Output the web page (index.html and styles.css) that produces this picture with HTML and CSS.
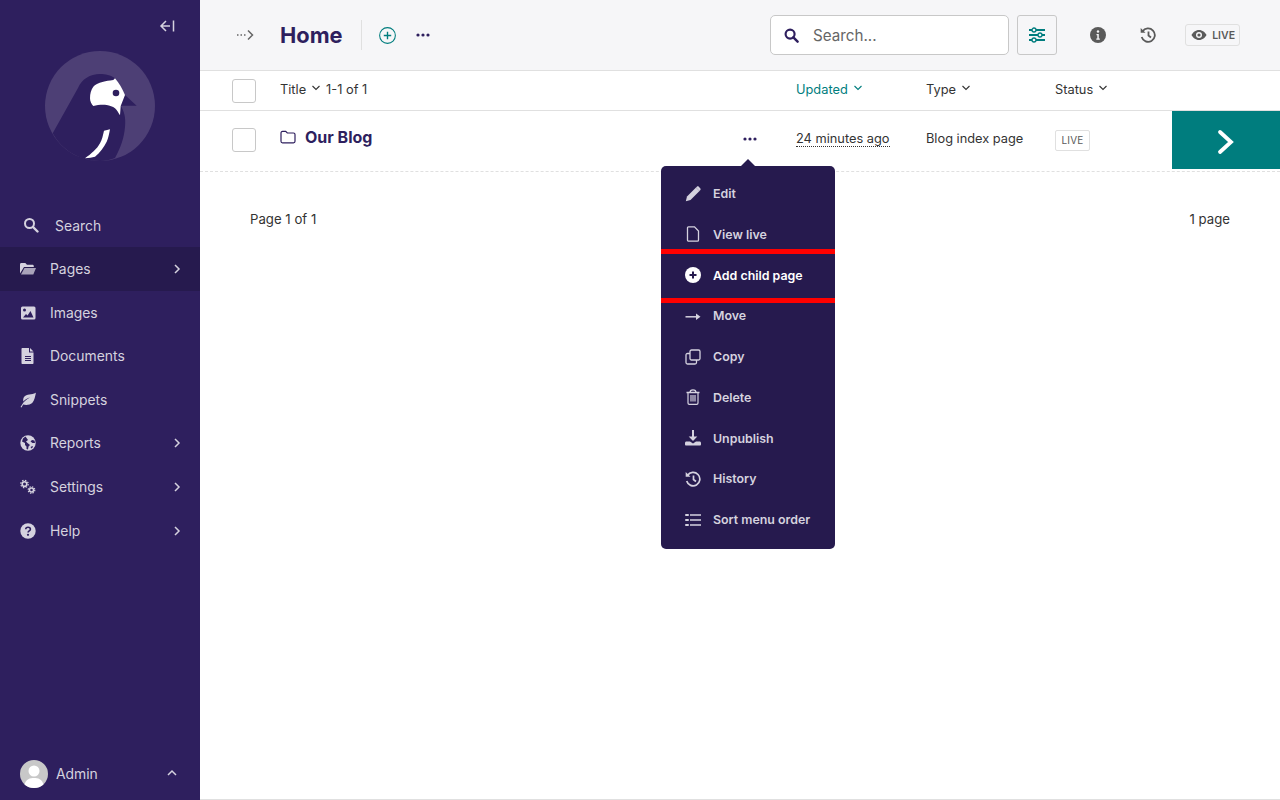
FILE: index.html
```html
<!DOCTYPE html>
<html lang="en">
<head>
    <meta charset="UTF-8">
    <meta name="viewport" content="width=device-width, initial-scale=1.0">
    <title>Home - Pages</title>
    <link rel="stylesheet" href="styles.css">
</head>
<body>

<!-- sidebar -->
<aside class="sidebar">
    <div class="collapse-row">
        <svg class="collapse-icon" viewBox="0 0 16 14"><path d="M7 2 2 7l5 5M2 7h9M14.5 1.500v11" fill="none" stroke="currentColor" stroke-width="1.500"/></svg>
    </div>
    <div class="logo-row">
        <svg class="logo" viewBox="0 0 110 110">
            <circle cx="55" cy="55" r="55" fill="#4d3f75"/>
            <path d="M7.700 82.300 33 37C37 28 45 23 55 23c5 0 11 1 15 4.300L80 44l11.700 10.700H75.700C79 60 81 66 80 76c-1 11-4 20-10 31-5 2-10 3-15 3-21 0-38-11-47.300-27.700z" fill="#2e1f5e"/>
            <path d="M70 27.300 68.300 29C64 29.500 61 30 58.300 30.700 53 32 50 33.500 48.300 35.700 46 38.500 45 43 45 47.300c0 3 1.500 6 3.300 7.700 4-1 9-1.500 13.400-1 3 .5 6 1.500 8.300 3.300 2 2 3.500 4.500 5 7l.7-9.300L80 44c-2.500-6-6-12-10-16.700z" fill="#fff"/>
            <circle cx="71" cy="42" r="3.300" fill="#2e1f5e"/>
            <path d="M65 78.300 59 79.700C58 84 57 89 55 92.300 52 98 46 103 40 107.300c4-.3 7-.8 10-1.600C55 102 59 96 61.700 90.700 63.500 87 64 83 65 78.300z" fill="#fff"/>
        </svg>
    </div>

    <div class="side-search">
        <svg class="nav-icon" viewBox="0 0 16 16"><circle cx="6.500" cy="6.500" r="4.500" fill="none" stroke="currentColor" stroke-width="2"/><path d="m10 10 4.500 4.500" stroke="currentColor" stroke-width="2.400" stroke-linecap="round"/></svg>
        <span>Search</span>
    </div>

    <nav class="side-nav">
        <a class="nav-item active">
            <svg class="nav-icon" viewBox="0 0 16 16"><path d="M0 3.500C0 2.700.5 2 1.300 2h4l1.700 1.700h5.500c.7 0 1.300.6 1.300 1.300v1H4L0 12.500z" fill="currentColor"/><path d="M4.500 7H16l-2.700 6.500H1z" fill="currentColor" opacity=".75"/></svg>
            <span>Pages</span>
            <svg class="nav-arrow" viewBox="0 0 8 12"><path d="m2 2 4 4-4 4" fill="none" stroke="currentColor" stroke-width="1.500"/></svg>
        </a>
        <a class="nav-item">
            <svg class="nav-icon" viewBox="0 0 16 16"><rect x="1" y="1.500" width="14.500" height="13" rx="1.500" fill="currentColor"/><circle cx="4.500" cy="5" r="1.500" fill="#2e1f5e"/><path d="M3 12.500 6 9l1.500 1.500L10.500 6l3 6.500z" fill="#2e1f5e"/></svg>
            <span>Images</span>
        </a>
        <a class="nav-item">
            <svg class="nav-icon" viewBox="0 0 16 16"><path d="M2.500 0H9v4.500h4.500V15c0 .6-.4 1-1 1h-10c-.6 0-1-.4-1-1V1c0-.6.4-1 1-1z" fill="currentColor"/><path d="M10 0l3.500 3.500H10z" fill="currentColor"/><path d="M5 8.500h6M5 10.500h6M5 12.500h6" stroke="#2e1f5e" stroke-width="1"/></svg>
            <span>Documents</span>
        </a>
        <a class="nav-item">
            <svg class="nav-icon" viewBox="0 0 16 16"><path d="M15.500 1C12 3 6.500 1.500 4 5c-1 1.500-1 3.500-.5 4.500C5 7.500 7.500 6 10 5.500 7 7 4 9 1.500 13.500l-1 1.500 1 .5 1.700-3c2.800 1 6.800.5 9-1.500 2.500-2.500 2.800-6.500 3.800-10.500z" fill="currentColor"/></svg>
            <span>Snippets</span>
        </a>
        <a class="nav-item">
            <svg class="nav-icon" viewBox="0 0 16 16"><circle cx="8" cy="8" r="7.700" fill="currentColor"/><path d="M5.500 1.500 3 3.500 2 6.500l3 1.500L5 10l1.500 1.500V14l1.500.5.500-3L10 10 7.500 8 6 6.500l2-1.500zM12 5l-1.500 1.500 2 1.500H15l-.5-2.500zM10.500 12l2-1 .5 1-1.500 1.500z" fill="#2e1f5e"/></svg>
            <span>Reports</span>
            <svg class="nav-arrow" viewBox="0 0 8 12"><path d="m2 2 4 4-4 4" fill="none" stroke="currentColor" stroke-width="1.500"/></svg>
        </a>
        <a class="nav-item">
            <svg class="nav-icon" viewBox="0 0 16 16"><circle cx="4.500" cy="5" r="2.300" fill="none" stroke="currentColor" stroke-width="1.600"/><circle cx="4.500" cy="5" r="3.700" fill="none" stroke="currentColor" stroke-width="1.200" stroke-dasharray="1.500 1.400"/><circle cx="11.500" cy="11" r="2" fill="none" stroke="currentColor" stroke-width="1.500"/><circle cx="11.500" cy="11" r="3.300" fill="none" stroke="currentColor" stroke-width="1.200" stroke-dasharray="1.400 1.200"/></svg>
            <span>Settings</span>
            <svg class="nav-arrow" viewBox="0 0 8 12"><path d="m2 2 4 4-4 4" fill="none" stroke="currentColor" stroke-width="1.500"/></svg>
        </a>
        <a class="nav-item">
            <svg class="nav-icon" viewBox="0 0 16 16"><circle cx="8" cy="8" r="7.700" fill="currentColor"/><path d="M5.700 6.200C5.800 5 6.800 4.200 8 4.200c1.400 0 2.400.8 2.400 2 0 1.700-2.300 1.600-2.300 3.300" fill="none" stroke="#2e1f5e" stroke-width="1.600"/><circle cx="8" cy="11.800" r="1.100" fill="#2e1f5e"/></svg>
            <span>Help</span>
            <svg class="nav-arrow" viewBox="0 0 8 12"><path d="m2 2 4 4-4 4" fill="none" stroke="currentColor" stroke-width="1.500"/></svg>
        </a>
    </nav>

    <div class="side-footer">
        <svg class="avatar" viewBox="0 0 28 28"><circle cx="14" cy="14" r="14" fill="#c8c8c8"/><circle cx="14" cy="11" r="5.500" fill="#fff"/><path d="M4.500 24.500C6 19 10 18 14 18s8 1 9.500 6.500C21 27 17.500 28 14 28s-7-1-9.500-3.500z" fill="#fff"/></svg>
        <span>Admin</span>
        <svg class="footer-arrow" viewBox="0 0 12 8"><path d="m2 6 4-4 4 4" fill="none" stroke="currentColor" stroke-width="1.500"/></svg>
    </div>
</aside>

<main class="main">
    <!-- top bar -->
    <header class="topbar">
        <svg class="crumb-icon" viewBox="0 0 18 12"><path d="M1 6h1.500M4.500 6H6M8 6h1.500" stroke="currentColor" stroke-width="1.400"/><path d="m12 1.500 4.500 4.500-4.500 4.500" fill="none" stroke="currentColor" stroke-width="1.500"/></svg>
        <h1>Home</h1>
        <div class="divider"></div>
        <svg class="add-icon" viewBox="0 0 16 16"><circle cx="8" cy="8" r="7.400" fill="none" stroke="currentColor" stroke-width="1"/><path d="M4.500 8h7M8 4.500v7" stroke="currentColor" stroke-width="1.300"/></svg>
        <svg class="dots" viewBox="0 0 14 4"><circle cx="2" cy="2" r="1.600"/><circle cx="7" cy="2" r="1.600"/><circle cx="12" cy="2" r="1.600"/></svg>

        <div class="top-right">
            <div class="search-box">
                <svg class="search-icon" viewBox="0 0 16 16"><circle cx="6.500" cy="6.500" r="4.800" fill="none" stroke="currentColor" stroke-width="2.300"/><path d="m10 10 4.500 4.500" stroke="currentColor" stroke-width="2.600" stroke-linecap="round"/></svg>
                <span>Search...</span>
            </div>
            <div class="filter-btn">
                <svg viewBox="0 0 16 16"><path d="M0 3h16M0 8h16M0 13h16" stroke="#007d7e" stroke-width="1.800"/><circle cx="5" cy="3" r="2" fill="#f6f6f8" stroke="#007d7e" stroke-width="1.300"/><circle cx="11" cy="8" r="2" fill="#f6f6f8" stroke="#007d7e" stroke-width="1.300"/><circle cx="5" cy="13" r="2" fill="#f6f6f8" stroke="#007d7e" stroke-width="1.300"/></svg>
            </div>
            <svg class="info-icon" viewBox="0 0 16 16"><circle cx="8" cy="8" r="8" fill="#5a5a5a"/><circle cx="8" cy="4.500" r="1.200" fill="#f6f6f8"/><path d="M6.500 7h2.300v4.500h1v1.200h-3.500v-1.200h1V8.200h-.8z" fill="#f6f6f8"/></svg>
            <svg class="history-icon" viewBox="0 0 16 16"><path d="M2.500 4.500A6.700 6.700 0 1 1 1.700 10" fill="none" stroke="currentColor" stroke-width="1.800"/><path d="M.7 1v4.800h4.800z" fill="currentColor"/><path d="M8.500 4.500V8.500l2.500 2" fill="none" stroke="currentColor" stroke-width="1.800"/></svg>
            <div class="live-badge">
                <svg viewBox="0 0 16 12"><path d="M8 1C4.500 1 1.800 3.500.5 6c1.300 2.500 4 5 7.500 5s6.200-2.500 7.500-5C14.200 3.500 11.500 1 8 1z" fill="#5a5a5a"/><circle cx="8" cy="6" r="3" fill="#f6f6f8"/><circle cx="8" cy="6" r="1.600" fill="#5a5a5a"/></svg>
                <span>LIVE</span>
            </div>
        </div>
    </header>

    <!-- table -->
    <div class="list-head list-grid">
        <div class="check-cell"><div class="checkbox"></div></div>
        <div class="head-cell">
            <span>Title</span>
            <svg class="sort" viewBox="0 0 10 6"><path d="m1.500 1 3.500 3.500L8.500 1" fill="none" stroke="currentColor" stroke-width="1.100"/></svg>
            <span class="count">1-1 of 1</span>
        </div>
        <div class="head-cell updated">
            <span>Updated</span>
            <svg class="sort" viewBox="0 0 10 6"><path d="m1.500 1 3.500 3.500L8.500 1" fill="none" stroke="currentColor" stroke-width="1.100"/></svg>
        </div>
        <div class="head-cell">
            <span>Type</span>
            <svg class="sort" viewBox="0 0 10 6"><path d="m1.500 1 3.500 3.500L8.500 1" fill="none" stroke="currentColor" stroke-width="1.100"/></svg>
        </div>
        <div class="head-cell">
            <span>Status</span>
            <svg class="sort" viewBox="0 0 10 6"><path d="m1.500 1 3.500 3.500L8.500 1" fill="none" stroke="currentColor" stroke-width="1.100"/></svg>
        </div>
        <div></div>
    </div>

    <div class="list-row list-grid">
        <div class="check-cell"><div class="checkbox"></div></div>
        <div class="title-cell">
            <svg class="folder" viewBox="0 0 16 14"><path d="M1 3c0-1 .6-1.700 1.500-1.700h3.200L7.300 3h6.200c.9 0 1.500.7 1.500 1.500v6.800c0 .9-.6 1.500-1.500 1.500h-11c-.9 0-1.500-.6-1.500-1.500z" fill="none" stroke="currentColor" stroke-width="1.200"/></svg>
            <a class="page-title">Our Blog</a>
            <div class="row-more">
                <svg class="dots" viewBox="0 0 14 4"><circle cx="2" cy="2" r="1.600"/><circle cx="7" cy="2" r="1.600"/><circle cx="12" cy="2" r="1.600"/></svg>
                <div class="dropdown">
                    <a class="drop-item">
                        <svg viewBox="0 0 16 16"><path d="M11 1.500 14.500 5 5.500 14 .8 15.200 2 10.500z" fill="currentColor"/><path d="M11.800.8c.6-.6 1.400-.6 2 0l1.400 1.400c.6.600.6 1.400 0 2l-.8.800-3.400-3.400z" fill="currentColor"/></svg>
                        <span>Edit</span>
                    </a>
                    <a class="drop-item">
                        <svg viewBox="0 0 16 16"><path d="M3.500.8h6L13.500 5v9c0 .7-.5 1.200-1.200 1.200H3.700c-.7 0-1.200-.5-1.200-1.200V2c0-.7.4-1.200 1-1.200z" fill="none" stroke="currentColor" stroke-width="1.300"/></svg>
                        <span>View live</span>
                    </a>
                    <a class="drop-item marked">
                        <svg viewBox="0 0 16 16"><circle cx="8" cy="8" r="8" fill="#fff"/><path d="M4.500 8h7M8 4.500v7" stroke="#261a4e" stroke-width="2"/></svg>
                        <span>Add child page</span>
                    </a>
                    <a class="drop-item">
                        <svg viewBox="0 0 16 16"><path d="M.5 8.800h11" stroke="currentColor" stroke-width="1.500"/><path d="m11 5.500 4.500 3.300-4.500 3.200z" fill="currentColor"/></svg>
                        <span>Move</span>
                    </a>
                    <a class="drop-item">
                        <svg viewBox="0 0 16 16"><rect x="5" y="1" width="10" height="10" rx="1.500" fill="none" stroke="currentColor" stroke-width="1.300"/><path d="M5 4.500H2.500C1.600 4.500 1 5.100 1 6v7.500c0 .9.600 1.500 1.500 1.500H10c.9 0 1.500-.6 1.500-1.500V11" fill="none" stroke="currentColor" stroke-width="1.300"/></svg>
                        <span>Copy</span>
                    </a>
                    <a class="drop-item">
                        <svg viewBox="0 0 16 16"><path d="M1.500 3.500h13M5 3.500C5 1.500 6.500.8 8 .8s3 .7 3 2.700" fill="none" stroke="currentColor" stroke-width="1.300"/><path d="M3 3.500V14c0 .7.600 1.300 1.300 1.300h7.400c.7 0 1.300-.6 1.300-1.300V3.500M6 6v6.500M8 6v6.500M10 6v6.500" fill="none" stroke="currentColor" stroke-width="1.200"/></svg>
                        <span>Delete</span>
                    </a>
                    <a class="drop-item">
                        <svg viewBox="0 0 16 16"><path d="M8 0v8.500" stroke="currentColor" stroke-width="2"/><path d="m3.700 6.500 4.300 4.500 4.300-4.500z" fill="currentColor"/><path d="M0 13c0-.9.600-1.500 1.500-1.500H5l3 2 3-2h3.500c.9 0 1.500.6 1.500 1.500v1.500c0 .5-.5 1-1 1H1c-.5 0-1-.5-1-1z" fill="currentColor"/></svg>
                        <span>Unpublish</span>
                    </a>
                    <a class="drop-item">
                        <svg viewBox="0 0 16 16"><path d="M2.500 4.500A6.700 6.700 0 1 1 1.700 10" fill="none" stroke="currentColor" stroke-width="1.700"/><path d="M.7 1v4.800h4.800z" fill="currentColor"/><path d="M8.500 4.500V8.500l2.500 2" fill="none" stroke="currentColor" stroke-width="1.700"/></svg>
                        <span>History</span>
                    </a>
                    <a class="drop-item">
                        <svg viewBox="0 0 16 16"><path d="M5 3h11M5 8h11M5 13h11" stroke="currentColor" stroke-width="1.400"/><path d="M1 3h2M1 8h2M1 13h2" stroke="currentColor" stroke-width="2" stroke-linecap="round"/></svg>
                        <span>Sort menu order</span>
                    </a>
                </div>
            </div>
        </div>
        <div class="updated-cell"><span class="timeago">24 minutes ago</span></div>
        <div class="type-cell">Blog index page</div>
        <div class="status-cell"><span class="status-tag">LIVE</span></div>
        <a class="open-btn">
            <svg viewBox="0 0 18 26"><path d="m3 3 11 10L3 23" fill="none" stroke="#fff" stroke-width="3.800" stroke-linecap="round"/></svg>
        </a>
    </div>

    <div class="pagination">
        <span>Page 1 of 1</span>
        <span>1 page</span>
    </div>
</main>

</body>
</html>
```

FILE: styles.css
```css
* {
    box-sizing: border-box;
}

body {
    margin: 0;
    height: 800px;
    display: flex;
    overflow: hidden;
    font-family: Inter, "Noto Sans", sans-serif;
    color: #333;
    background: #fff;
}

/* sidebar */
.sidebar {
    width: 200px;
    height: 800px;
    flex-shrink: 0;
    display: flex;
    flex-direction: column;
    background: #2e1f5e;
    color: #d5d2df;
    font-size: 13.9px;
}

.collapse-row {
    display: flex;
    justify-content: flex-end;
    padding: 19px 25px 0 0;
    height: 51px;
}

.collapse-icon {
    width: 16px;
    height: 14px;
}

.logo-row {
    display: flex;
    justify-content: center;
    height: 110px;
}

.logo {
    width: 110px;
    height: 110px;
}

.side-search {
    display: flex;
    align-items: center;
    gap: 16px;
    height: 43.2px;
    margin-top: 43px;
    padding-left: 23px;
}

.side-search span {
    margin-top: 1px;
}

.side-search .nav-icon {
    margin-top: -1px;
}

.nav-icon {
    width: 16px;
    height: 16px;
    flex-shrink: 0;
}

.side-nav {
    display: flex;
    flex-direction: column;
}

.nav-item {
    display: flex;
    align-items: center;
    gap: 14px;
    height: 43.6px;
    padding: 0 20px;
}

.nav-item.active {
    background: #261a4e;
}

.nav-arrow {
    width: 8px;
    height: 12px;
    margin-left: auto;
    margin-right: -1px;
}

.side-footer {
    display: flex;
    align-items: center;
    gap: 8px;
    margin-top: auto;
    height: 28px;
    margin-bottom: 12px;
    padding: 0 22px 0 20px;
}

.side-footer span {
    margin-top: -1px;
}

.avatar {
    width: 28px;
    height: 28px;
}

.footer-arrow {
    width: 12px;
    height: 8px;
    margin-left: auto;
    margin-top: -2px;
}

/* top bar */
.main {
    flex: 1;
    min-width: 0;
    height: 800px;
    border-bottom: 1px solid #e0e0e0;
}

.topbar {
    display: flex;
    align-items: center;
    height: 71px;
    padding: 0 40px 0 36px;
    background: #f6f6f8;
    border-bottom: 1px solid #e0e0e0;
}

.crumb-icon {
    width: 18px;
    height: 12px;
    color: #666;
}

h1 {
    margin: 0 0 0 26px;
    font-size: 21.8px;
    font-weight: 700;
    color: #2e1f5e;
}

.divider {
    width: 1px;
    height: 30px;
    margin-left: 18px;
    background: #e0e0e0;
}

.add-icon {
    width: 17px;
    height: 17px;
    margin-left: 17px;
    color: #007d7e;
}

.dots {
    width: 14px;
    height: 4px;
    fill: #2e1f5e;
}

.topbar .dots {
    margin-left: 20px;
}

.top-right {
    display: flex;
    align-items: center;
    margin-left: auto;
}

.search-box {
    display: flex;
    align-items: center;
    gap: 14px;
    width: 239px;
    height: 40px;
    padding-left: 13px;
    background: #fff;
    border: 1px solid #c8c8c8;
    border-radius: 5px;
    font-size: 15.2px;
    color: #666;
}

.search-icon {
    width: 15px;
    height: 15px;
    color: #2e1f5e;
}

.filter-btn {
    display: flex;
    align-items: center;
    justify-content: center;
    width: 40px;
    height: 40px;
    margin-left: 8px;
    border: 1px solid #c8c8c8;
    border-radius: 3px;
}

.filter-btn svg {
    width: 16px;
    height: 16px;
}

.info-icon {
    width: 16px;
    height: 16px;
    margin-left: 33px;
}

.history-icon {
    width: 16px;
    height: 16px;
    margin-left: 34px;
    color: #5a5a5a;
}

.live-badge {
    display: flex;
    align-items: center;
    justify-content: space-between;
    width: 55px;
    height: 22px;
    margin-left: 29px;
    padding: 0 4px 0 5px;
    border: 1px solid #e0e0e0;
    border-radius: 3px;
    font-size: 10.5px;
    font-weight: 600;
    color: #5a5a5a;
}

.live-badge svg {
    width: 16px;
    height: 12px;
}

/* listing */
.list-grid {
    display: grid;
    grid-template-columns: 80px 516px 130px 129px 117px 108px;
    align-items: center;
}

.list-head {
    height: 40px;
    border-bottom: 1px solid #e0e0e0;
    font-size: 12.8px;
}

.check-cell {
    padding-left: 32px;
}

.checkbox {
    width: 24px;
    height: 24px;
    background: #fff;
    border: 1px solid #c8c8c8;
    border-radius: 3px;
}

.head-cell {
    display: flex;
    align-items: center;
    gap: 5px;
    padding-bottom: 3px;
}

.head-cell.updated {
    color: #007d7e;
}

.sort {
    width: 10px;
    height: 6px;
    margin-top: -2px;
}

.list-row {
    height: 61px;
    border-bottom: 1px dashed #e0e0e0;
    font-size: 12.8px;
    align-items: start;
}

.list-row .check-cell {
    padding-top: 17px;
}

.title-cell {
    display: flex;
    align-items: center;
    padding: 16px 39px 0 0;
}

.folder {
    width: 16px;
    height: 14px;
    color: #2e1f5e;
}

.page-title {
    margin-left: 9px;
    font-size: 16px;
    font-weight: 700;
    color: #2e1f5e;
}

.row-more {
    position: relative;
    display: flex;
    margin-left: auto;
    margin-top: 4px;
}

.updated-cell,
.type-cell {
    padding-top: 20px;
}

.status-cell {
    padding-top: 19px;
}

.timeago {
    display: inline-block;
    line-height: 15px;
    border-bottom: 1px dotted #333;
}

.status-tag {
    display: inline-block;
    width: 35px;
    height: 21px;
    text-align: center;
    border: 1px solid #e0e0e0;
    border-radius: 2px;
    font-size: 10px;
    line-height: 19px;
    letter-spacing: 0.2px;
    color: #5a5a5a;
}

.open-btn {
    display: flex;
    align-items: center;
    justify-content: center;
    height: 58px;
    padding-top: 4px;
    background: #007d7e;
}

.open-btn svg {
    width: 18px;
    height: 26px;
}

/* dropdown */
.dropdown {
    position: absolute;
    top: 29px;
    left: -82px;
    width: 174px;
    height: 383px;
    padding: 7.25px 0 0;
    background: #261a4e;
    border-radius: 5px;
    color: #d5d2df;
    font-size: 12.4px;
    font-weight: 600;
    z-index: 10;
}

.dropdown::before {
    content: '';
    position: absolute;
    top: -7px;
    left: 80px;
    border-left: 7px solid transparent;
    border-right: 7px solid transparent;
    border-bottom: 7px solid #261a4e;
}

.drop-item {
    position: relative;
    display: flex;
    align-items: center;
    gap: 12px;
    height: 40.75px;
    padding-left: 24px;
}

.drop-item svg {
    width: 16px;
    height: 16px;
}

.drop-item.marked {
    color: #fff;
}

/* red highlight over the item */
.drop-item.marked::after {
    content: '';
    position: absolute;
    top: -6px;
    bottom: -7px;
    left: 0;
    right: 0;
    border-top: 5px solid #f00;
    border-bottom: 5px solid #f00;
}

.pagination {
    display: flex;
    justify-content: space-between;
    padding: 39px 50px 0;
    font-size: 13.2px;
}
```
